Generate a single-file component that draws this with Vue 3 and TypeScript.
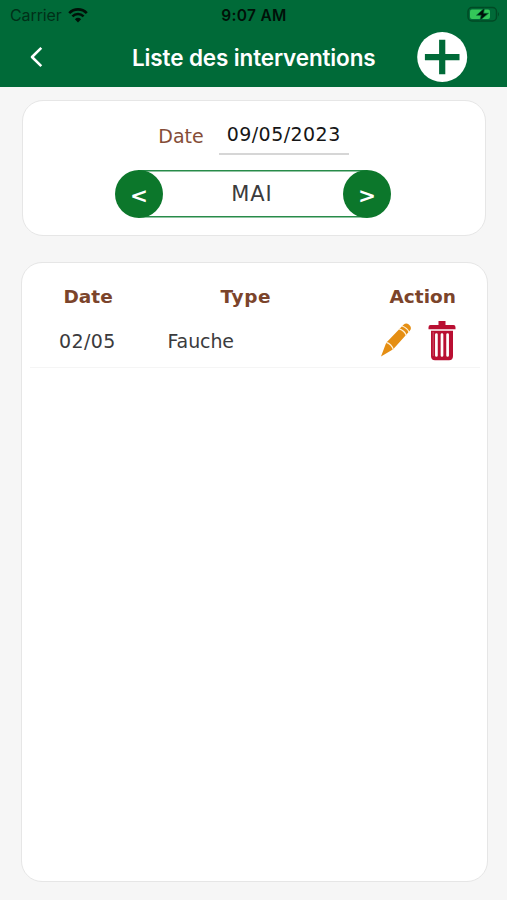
<script setup lang="ts">
import { ref } from 'vue'

interface Intervention {
  id: number
  date: string
  type: string
}

const months: string[] = ['JANVIER', 'FÉVRIER', 'MARS', 'AVRIL', 'MAI', 'JUIN', 'JUILLET', 'AOÛT', 'SEPTEMBRE', 'OCTOBRE', 'NOVEMBRE', 'DÉCEMBRE']
const month = ref(4)
const selectedDate = ref('09/05/2023')
const interventions = ref<Intervention[]>([{ id: 1, date: '02/05', type: 'Fauche' }])

function shiftMonth(step: number): void {
  month.value = (month.value + step + 12) % 12
}

function remove(id: number): void {
  interventions.value = interventions.value.filter((item) => item.id !== id)
}
</script>

<template>
  <div class="screen">
    <header class="header">
      <div class="status">
        <div class="carrier">
          <span class="carrier-name">Carrier</span>
          <svg class="wifi" width="20" height="15" viewBox="0 0 20 15">
            <path d="M1.2 5.1 C6 .1 14 .1 18.8 5.1" fill="none" stroke="#001108" stroke-width="2.6" />
            <path d="M4.4 8.4 C7.5 5.3 12.5 5.3 15.6 8.4" fill="none" stroke="#001108" stroke-width="2.5" />
            <path d="M6.9 11.2 Q10 8.4 13.1 11.2 L10 14.4Z" fill="#001108" />
          </svg>
        </div>
        <span class="clock">9:07 AM</span>
        <svg class="battery" width="33" height="18" viewBox="0 0 33 18">
          <rect x="1" y="1.5" width="28.5" height="13.5" rx="4" fill="none" stroke="#004a25" stroke-width="1.5" />
          <path d="M31 6 Q33 8.2 31 10.5Z" fill="#004a25" />
          <rect x="3" y="3.5" width="20" height="9.6" rx="2" fill="#34c759" />
          <path d="M17.5 2 L9.5 9.2 H14.2 L12.8 14.5 L21.5 7.3 H16.6Z" fill="#001108" stroke="#006a38" stroke-width=".7" />
        </svg>
      </div>
      <div class="nav">
        <button class="back" aria-label="Retour">
          <svg width="14" height="22" viewBox="0 0 14 22">
            <path d="M12.3 1.9 L3 11 L12.3 20.1" fill="none" stroke="#fff" stroke-width="2.6" stroke-linejoin="round" />
          </svg>
        </button>
        <h1 class="title">Liste des interventions</h1>
        <button class="add" aria-label="Ajouter">
          <svg width="51" height="51" viewBox="0 0 51 51">
            <circle cx="25.2" cy="25" r="25" fill="#fff" />
            <path d="M25.2 7.7 V42.3 M7.9 25.2 H42.5" stroke="#006a38" stroke-width="6.2" />
          </svg>
        </button>
      </div>
    </header>

    <section class="card filter">
      <div class="date-row">
        <span class="label">Date</span>
        <span class="value">{{ selectedDate }}</span>
      </div>
      <div class="month">
        <button class="round" @click="shiftMonth(-1)"><span>&lt;</span></button>
        <span class="month-name">{{ months[month] }}</span>
        <button class="round" @click="shiftMonth(1)"><span>&gt;</span></button>
      </div>
    </section>

    <section class="card list">
      <div class="row head">
        <span class="h-date">Date</span>
        <span class="h-type">Type</span>
        <span class="h-action">Action</span>
      </div>
      <div v-for="item in interventions" :key="item.id" class="row item">
        <span class="c-date">{{ item.date }}</span>
        <span class="c-type">{{ item.type }}</span>
        <div class="actions">
          <button aria-label="Modifier">
            <svg width="32" height="36" viewBox="0 0 32 36">
              <path d="M1 34.5 L6.2 20.8 L23.5 2.8 Q26 .2 28.8 2.4 Q32.5 5.2 29.8 8.8 L13.2 27.3Z" fill="#e58e12" />
              <path d="M6.2 20.3 Q11.5 21.8 13.4 27.8 M19.2 6.8 Q24.8 8.6 26.3 13.6 M22 4 Q27.5 5.8 29.2 10.6" fill="none" stroke="#fff0d7" stroke-width="1.3" />
            </svg>
          </button>
          <button aria-label="Supprimer" @click="remove(item.id)">
            <svg width="28" height="41" viewBox="0 0 28 41">
              <path d="M10.5 1 H17.5 V5 H25.5 Q27.5 5 27.5 7.3 V9.2 H.5 V7.3 Q.5 5 2.5 5 H10.5Z" fill="#b90f32" />
              <path d="M3 10.8 H25 V36 Q25 40.2 21 40.2 H7 Q3 40.2 3 36Z" fill="#b90f32" />
              <path d="M8.4 14.5 V35.5 M14 14.5 V35.5 M19.6 14.5 V35.5" stroke="#fff" stroke-width="2.7" stroke-linecap="round" />
              <path d="M5.2 12 V36" stroke="#dc7b8d" stroke-width=".6" />
            </svg>
          </button>
        </div>
      </div>
    </section>
  </div>
</template>

<style>
body {
  background: #f6f6f6;
}
</style>

<style scoped>
.screen {
  box-sizing: border-box;
  width: 507px;
  height: 900px;
  display: flex;
  flex-direction: column;
  background: #f6f6f6;
  font-family: Verdana, "DejaVu Sans", sans-serif;
  font-size: 19px;
  color: #3b3b3d;
  overflow: hidden;
}
button {
  border: 0;
  padding: 0;
  background: none;
  font: inherit;
  display: block;
}
svg {
  display: block;
}
.header {
  height: 87px;
  flex: none;
  background: #006a38;
  font-family: Inter, sans-serif;
}
.status {
  height: 30px;
  display: grid;
  grid-template-columns: 1fr auto 1fr;
  align-items: center;
  padding: 0 7px 0 10px;
  font-size: 16px;
  color: #001108;
}
.carrier {
  display: flex;
  align-items: center;
  gap: 6px;
}
.carrier-name {
  color: #003018;
  letter-spacing: -0.1px;
}
.clock {
  margin-right: 2px;
  font-weight: 600;
  font-size: 15.5px;
  letter-spacing: 0.3px;
}
.battery {
  justify-self: end;
}
.nav {
  display: grid;
  grid-template-columns: 132px 1fr 51px;
  align-items: center;
  height: 54px;
  padding-right: 39px;
}
.back {
  margin-left: 29px;
  justify-self: start;
}
.title {
  margin: 2px 0 0;
  font-size: 22.5px;
  line-height: 28px;
  font-weight: 600;
  letter-spacing: -0.13px;
  color: #fff;
  white-space: nowrap;
}
.card {
  box-sizing: border-box;
  border: 1.5px solid #e6e6e6;
  border-radius: 21px;
  background: #fff;
}
.filter {
  flex: none;
  height: 136px;
  margin: 13px 21px 0 22px;
  padding-top: 16px;
  display: flex;
  flex-direction: column;
  align-items: center;
}
.date-row {
  display: flex;
  gap: 15px;
  height: 38px;
  margin-bottom: 15px;
  margin-right: 1px;
}
.label {
  padding-top: 8px;
  line-height: 22px;
  color: #854d37;
}
.value {
  box-sizing: border-box;
  width: 130px;
  padding-top: 6px;
  line-height: 22px;
  text-align: center;
  color: #161616;
  letter-spacing: 0.45px;
  border-bottom: 2px solid #d6d6d6;
}
.month {
  box-sizing: border-box;
  width: 276px;
  height: 48px;
  margin-right: 2px;
  display: flex;
  justify-content: space-between;
  align-items: center;
  background: linear-gradient(#278b49, #278b49) center 0 / 83% 1.5px no-repeat,
    linear-gradient(#278b49, #278b49) center 46px / 83% 1.5px no-repeat;
}
.round {
  width: 48px;
  height: 48px;
  border-radius: 50%;
  background: #0c772b;
  color: #fff;
  font-weight: bold;
  font-size: 21.5px;
  line-height: 48px;
  text-align: center;
}
.round span {
  display: block;
  padding-top: 3px;
  line-height: 45px;
}
.month-name {
  margin-right: 2px;
  font-size: 21px;
  letter-spacing: 0.9px;
}
.list {
  height: 620px;
  margin: 26px 19.5px 0 20.5px;
  padding: 14px 7px 0 8px;
}
.row {
  display: grid;
  grid-template-columns: 138px 1fr 101px;
  align-items: center;
}
.head {
  height: 38px;
  font-weight: bold;
  font-size: 18.5px;
  color: #7b442b;
}
.h-date {
  padding-left: 34px;
}
.h-type {
  padding-left: 53px;
  letter-spacing: 0.6px;
}
.h-action {
  padding-left: 11px;
}
.item {
  height: 52px;
  border-bottom: 1px solid #f5f5f5;
}
.c-date {
  padding-left: 29.5px;
  letter-spacing: 0.4px;
}
.c-type {
  letter-spacing: -0.1px;
}
.actions {
  display: flex;
  align-items: center;
  gap: 16px;
  padding: 0 0 2px 1px;
}
</style>
